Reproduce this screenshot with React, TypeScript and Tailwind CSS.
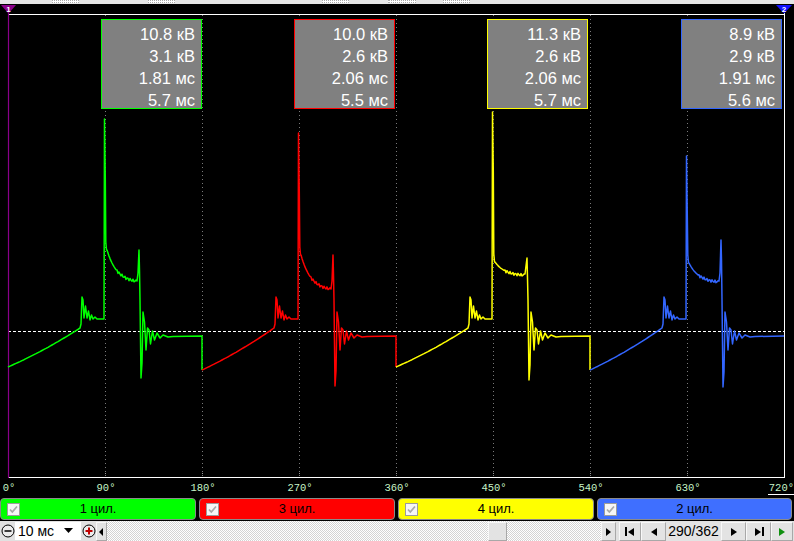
import React from "react";

type Wave = {
  x0: number;
  y0: number;
  peak: number;
  d0: number;
  d1: number;
  sTop: number;
  trough: number;
  color: string;
  endY: number | null;
};

const WAVES: Wave[] = [
  { x0: 8, y0: 367, peak: 119, d0: 250, d1: 283, sTop: 250, trough: 378, color: "#00ff00", endY: 370 },
  { x0: 202, y0: 370, peak: 133, d0: 255, d1: 291, sTop: 255, trough: 386, color: "#ff0000", endY: 367 },
  { x0: 396, y0: 367, peak: 112, d0: 262, d1: 276, sTop: 258, trough: 380, color: "#ffff00", endY: 370 },
  { x0: 590, y0: 370, peak: 156, d0: 263, d1: 283, sTop: 240, trough: 387, color: "#3366ff", endY: null },
];

function wavePoints(w: Wave): string {
  const p: [number, number][] = [];
  for (let dx = 0; dx <= 72; dx += 2) {
    const t = dx / 72;
    p.push([dx, w.y0 - (w.y0 - 328) * (0.8 * t + 0.2 * t * t)]);
  }
  const a: [number, number][] = [
    [73, 324], [74, 297], [75, 300], [76, 318], [77.5, 306], [79, 318],
    [80.5, 311], [82, 320], [83.5, 315], [85, 319], [87, 317], [89, 319], [96, 319],
    [96.5, w.peak], [97.3, w.peak + 60], [97.8, w.d0 - 8], [98.5, w.d0],
  ];
  p.push(...a);
  for (let dx = 99; dx <= 128; dx += 1) {
    const base = w.d1 - (w.d1 - w.d0) * Math.exp(-(dx - 99) / 10);
    const n = dx > 108 ? Math.sin(dx * 2.3) * 1.4 : 0;
    p.push([dx, base + n]);
  }
  const b: [number, number][] = [
    [129, w.d1 - 2], [130, w.d1 - 10], [131, w.sTop], [131.5, w.sTop + 20], [132, 300],
    [133, w.trough], [134, w.trough - 15], [135, 312], [136.5, 322], [138, 350],
    [139.5, 328], [141, 330], [142.5, 344], [144.5, 331], [146.5, 340], [149, 333],
    [152, 338], [155, 335], [160, 337], [165, 336.5], [194, 336],
  ];
  p.push(...b);
  if (w.endY !== null) p.push([194, w.endY]);
  return p.map(([dx, y]) => `${(w.x0 + dx).toFixed(1)},${y.toFixed(1)}`).join(" ");
}

const GRID = [105, 202, 299, 396, 493, 590, 687];
const LABELS: [number, string][] = [
  [8, "0°"], [105, "90°"], [202, "180°"], [299, "270°"], [396, "360°"],
  [493, "450°"], [590, "540°"], [687, "630°"],
];

function Scope() {
  return (
    <svg className="absolute inset-0" width="794" height="494" viewBox="0 4 794 494">
      {GRID.map((x) => (
        <line key={x} x1={x + 0.5} y1={15} x2={x + 0.5} y2={476} stroke="#7a7a7a" strokeWidth={1} strokeDasharray="1 3" />
      ))}
      <line x1={8} y1={14.5} x2={784} y2={14.5} stroke="#ffffff" strokeWidth={1} />
      <line x1={8} y1={477.5} x2={784} y2={477.5} stroke="#ffffff" strokeWidth={1} />
      <line x1={8} y1={331.5} x2={784} y2={331.5} stroke="#ffffff" strokeWidth={1} strokeDasharray="3 2" />
      <line x1={784.5} y1={13} x2={784.5} y2={478} stroke="#ffffff" strokeWidth={1} />
      <line x1={8.5} y1={12} x2={8.5} y2={478} stroke="#8a008a" strokeWidth={1.2} />
      {GRID.map((x) => (
        <rect key={"t" + x} x={x} y={473} width={1} height={1} fill="#9a9a9a" />
      ))}
      {WAVES.map((w) => (
        <polyline key={w.x0} points={wavePoints(w)} fill="none" stroke={w.color} strokeWidth={1.5} strokeLinejoin="round" />
      ))}
      <polygon points="1,5 16,5 8.5,13.5" fill="#8a008a" />
      <text x={8.5} y={11.5} fill="#ffffff" fontSize={8} fontWeight={700} textAnchor="middle" fontFamily="Liberation Sans, Arial, sans-serif">1</text>
      <polygon points="776,5 792,5 784,13.5" fill="#1010ff" />
      <text x={784} y={11.5} fill="#ffffff" fontSize={8} fontWeight={700} textAnchor="middle" fontFamily="Liberation Sans, Arial, sans-serif">2</text>
      {LABELS.map(([x, s]) => (
        <text key={s} x={x + 1} y={491} fill="#c8f5c8" fontSize={10.5} textAnchor="middle" fontFamily="Liberation Mono, DejaVu Sans Mono, monospace">{s}</text>
      ))}
      <text x={794} y={491} fill="#c8f5c8" fontSize={10.5} textAnchor="end" fontFamily="Liberation Mono, DejaVu Sans Mono, monospace">720°</text>
      <line x1={768} y1={494.5} x2={794} y2={494.5} stroke="#ffffff" strokeWidth={1} />
    </svg>
  );
}

const BOXES = [
  { cls: "left-[101px] border-[#00ff00]", v: ["10.8 кВ", "3.1 кВ", "1.81 мс", "5.7 мс"] },
  { cls: "left-[294px] border-[#ff0000]", v: ["10.0 кВ", "2.6 кВ", "2.06 мс", "5.5 мс"] },
  { cls: "left-[487px] border-[#ffff00]", v: ["11.3 кВ", "2.6 кВ", "2.06 мс", "5.7 мс"] },
  { cls: "left-[681px] border-[#3366ff]", v: ["8.9 кВ", "2.9 кВ", "1.91 мс", "5.6 мс"] },
];

const CHANNELS = [
  { cls: "w-[196px] bg-[#00ff00]", label: "1 цил." },
  { cls: "w-[196px] bg-[#ff0000]", label: "3 цил." },
  { cls: "w-[196px] bg-[#ffff00]", label: "4 цил." },
  { cls: "w-[195px] bg-[#3f6fff]", label: "2 цил." },
];

function Check() {
  return (
    <svg width="13" height="13" viewBox="0 0 13 13">
      <rect x="0.5" y="0.5" width="12" height="12" fill="#f6f6f6" stroke="#9c9c9c" />
      <path d="M3 6.5 L5.3 9 L10 3.5" fill="none" stroke="#a8a8a8" strokeWidth="1.7" />
    </svg>
  );
}

function Tri({ dir, color = "#000" }: { dir: "l" | "r"; color?: string }) {
  return (
    <svg width="8" height="10" viewBox="0 0 8 10">
      {dir === "r" ? <polygon points="1,1 7,5 1,9" fill={color} /> : <polygon points="7,1 1,5 7,9" fill={color} />}
    </svg>
  );
}

function Btn({ w, children }: { w: string; children: React.ReactNode }) {
  return (
    <div className={`${w} h-[19px] mt-[1px] flex items-center justify-center bg-[#e3e3e3] border-l border-t border-l-[#f8f8f8] border-t-[#f8f8f8] border-r border-b border-r-[#a8a8a8] border-b-[#a8a8a8]`}>
      {children}
    </div>
  );
}

export default function App() {
  return (
    <div className="w-[794px] h-[541px] overflow-hidden bg-[#e4e4e4] flex flex-col font-['Liberation_Sans',Arial,sans-serif]">
      <div className="h-[4px] bg-[#e6e6e6] flex items-start">
        <div className="ml-[52px] w-[27px] h-[3px] bg-white border border-dotted border-[#aaaaaa]" />
        <div className="ml-[69px] w-[27px] h-[3px] bg-white border border-dotted border-[#aaaaaa]" />
        <div className="ml-[147px] w-[27px] h-[3px] bg-white border border-dotted border-[#aaaaaa]" />
        <div className="ml-[39px] w-[28px] h-[3px] bg-white border border-dotted border-[#aaaaaa]" />
        <div className="ml-[27px] w-[27px] h-[3px] bg-white border border-dotted border-[#aaaaaa]" />
      </div>
      <div className="bg-black h-[517px] flex flex-col">
        <div className="relative h-[494px]">
          <Scope />
          {BOXES.map((b) => (
            <div key={b.cls} className={`absolute top-[15px] w-[101px] h-[90px] border border-solid bg-[#808080] pt-[3px] pr-[6px] text-right text-white text-[16.5px] leading-[22px] ${b.cls}`}>
              {b.v.map((s) => (
                <div key={s}>{s}</div>
              ))}
            </div>
          ))}
        </div>
        <div className="h-[22px] flex gap-[3px]">
          {CHANNELS.map((c) => (
            <div key={c.label} className={`relative h-[22px] rounded-[4px] border border-[#8a8a8a] flex items-center justify-center text-[13px] text-black ${c.cls}`}>
              <div className="absolute left-[6px] top-[4px] flex">
                <Check />
              </div>
              <span>{c.label}</span>
            </div>
          ))}
        </div>
      </div>
      <div className="h-[20px] flex bg-[#e1e1e1]">
        <div className="w-[15px] flex items-center justify-center">
          <svg width="14" height="14" viewBox="0 0 14 14">
            <circle cx="7" cy="7" r="6" fill="#ececec" stroke="#000" strokeWidth="1" />
            <line x1="3.5" y1="7" x2="10.5" y2="7" stroke="#000" strokeWidth="1.5" />
          </svg>
        </div>
        <div className="w-[66px] h-[18px] mt-[1px] bg-white flex items-center justify-between pl-[3px] pr-[8px] text-[14px] text-black">
          <span>10 мс</span>
          <svg width="9" height="6" viewBox="0 0 9 6">
            <polygon points="0,0 9,0 4.5,5" fill="#000" />
          </svg>
        </div>
        <div className="w-[15px] flex items-center justify-center">
          <svg width="14" height="14" viewBox="0 0 14 14">
            <circle cx="7" cy="7" r="6" fill="#ececec" stroke="#000" strokeWidth="1" />
            <line x1="3.5" y1="7" x2="10.5" y2="7" stroke="#c00000" strokeWidth="2" />
            <line x1="7" y1="3.5" x2="7" y2="10.5" stroke="#c00000" strokeWidth="2" />
          </svg>
        </div>
        <Btn w="w-[11px]">
          <svg width="5" height="8" viewBox="0 0 5 8"><polygon points="4,0 0,4 4,8" fill="#000" /></svg>
        </Btn>
        <div className="w-[494px] flex bg-[repeating-conic-gradient(#ffffff_0_25%,#d4d4d4_0_50%)] bg-[length:2px_2px]">
          <div className="w-[381px]" />
          <Btn w="w-[19px]"><span /></Btn>
        </div>
        <Btn w="w-[15px]">
          <svg width="5" height="8" viewBox="0 0 5 8"><polygon points="0,0 5,4 0,8" fill="#000" /></svg>
        </Btn>
        <div className="w-[3px]" />
        <Btn w="w-[22px]">
          <div className="flex items-center"><div className="w-[2px] h-[9px] bg-black" /><Tri dir="l" /></div>
        </Btn>
        <Btn w="w-[25px]"><Tri dir="l" /></Btn>
        <div className="w-[55px] flex items-center justify-center text-[14px] text-black bg-[#e3e3e3] mt-[1px] h-[19px]">290/362</div>
        <Btn w="w-[25px]"><Tri dir="r" /></Btn>
        <Btn w="w-[25px]">
          <div className="flex items-center"><Tri dir="r" /><div className="w-[2px] h-[9px] bg-black" /></div>
        </Btn>
        <Btn w="w-[22px]"><Tri dir="r" color="#109010" /></Btn>
      </div>
    </div>
  );
}
